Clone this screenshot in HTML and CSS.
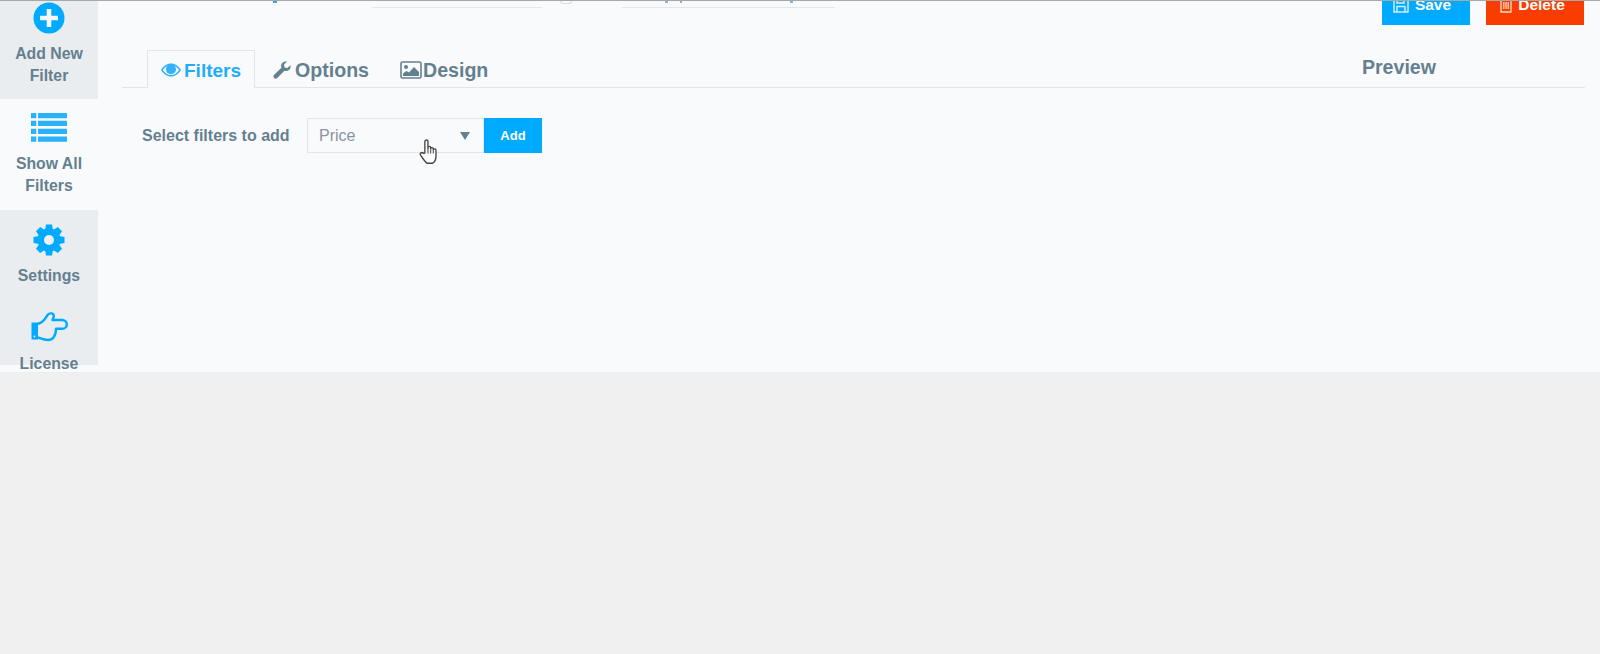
FILE: index.html
```html
<!DOCTYPE html>
<html>
<head>
<meta charset="utf-8">
<title>Filters</title>
<link rel="stylesheet" href="styles.css">
</head>
<body>
<div class="page">
  <ul class="side">
    <li class="item item-add">
      <svg class="icon" width="32" height="32" viewBox="0 0 32 32"><circle cx="16" cy="16" r="15.500" fill="#00aaff"/><path d="M13.700 7h4.600v6.700H25v4.600h-6.700V25h-4.600v-6.700H7v-4.600h6.700z" fill="#f4f9fc"/></svg>
      <span>Add New<br>Filter</span>
    </li>
    <li class="item item-list">
      <svg class="icon" width="36" height="29" viewBox="0 0 36 29" fill="#29b2fb"><path d="M0 0h5.300v5.300H0zM7 0h29v5.300H7zM0 7.700h5.300V13H0zM7 7.700h29V13H7zM0 15.700h5.300V21H0zM7 15.700h29V21H7zM0 23.500h5.300v5.300H0zM7 23.500h29v5.300H7z"/></svg>
      <span>Show All<br>Filters</span>
    </li>
    <li class="item item-settings">
      <svg class="icon" width="32" height="32" viewBox="0 0 32 32"><g fill="#00aaff"><path d="M13 .5h6l1 5.500h-8z"/><path d="M13 .5h6l1 5.500h-8z" transform="rotate(45 16 16)"/><path d="M13 .5h6l1 5.500h-8z" transform="rotate(90 16 16)"/><path d="M13 .5h6l1 5.500h-8z" transform="rotate(135 16 16)"/><path d="M13 .5h6l1 5.500h-8z" transform="rotate(180 16 16)"/><path d="M13 .5h6l1 5.500h-8z" transform="rotate(225 16 16)"/><path d="M13 .5h6l1 5.500h-8z" transform="rotate(270 16 16)"/><path d="M13 .5h6l1 5.500h-8z" transform="rotate(315 16 16)"/><circle cx="16" cy="16" r="11.500"/></g><circle cx="16" cy="16" r="5" fill="#eef1f4"/></svg>
      <span>Settings</span>
    </li>
    <li class="item item-license">
      <svg class="icon" width="37" height="31" viewBox="0 0 37 31"><rect x=".5" y="10.500" width="6.500" height="17" fill="#00aaff"/><circle cx="3.500" cy="24.500" r=".9" fill="#eef1f4"/><path d="M7 12c3-1 5-2.500 6.500-4.500L17 2.500c1.500-1.700 5.500-1.500 5.800 1 .2 1.500-.8 3-1.300 4.500H31c3 0 4.800 2 4.800 4.400s-1.800 4.400-4.800 4.400h-6c0 3.200-.5 6.200-2.500 8.700-1.500 2-3.500 2.500-5.500 2.500-4 0-7-1.500-10-2.500" fill="none" stroke="#00aaff" stroke-width="2.400" stroke-linejoin="round"/></svg>
      <span>License</span>
    </li>
  </ul>

  <div class="main">
    <div class="topbar">
      <div class="top-fields">
        <span class="top-input input-name"></span>
        <span class="top-check"></span>
        <span class="top-input input-code"></span>
      </div>
      <a class="btn btn-save">
        <svg width="16" height="16" viewBox="0 0 16 16" fill="none" stroke="#cfeeff" stroke-width="1.500"><path d="M1 1h11.500L15 3.500V15H1zM4 1v5h7V1M4 15v-5.500h8V15"/></svg>
        Save
      </a>
      <a class="btn btn-delete">
        <svg width="12" height="15" viewBox="0 0 12 15" fill="none" stroke="#ffdcc8" stroke-width="1.300"><path d="M1 1h10v13H1zM3.800 4v7M6 4v7M8.200 4v7"/></svg>
        Delete
      </a>
    </div>

    <div class="tabs">
      <a class="tab tab-active">
        <svg width="20" height="14" viewBox="0 0 20 14"><path d="M0 7c2.500-4 6-6.500 10-6.500S17.500 3 20 7c-2.500 4-6 6.500-10 6.500S2.500 11 0 7zm1.900 0c2 3 4.800 5 8.100 5s6.100-2 8.100-5c-1.200-1.800-2.700-3.200-4.400-4.100.8.900 1.300 2.100 1.300 3.400 0 2.700-2.200 4.900-5 4.900s-5-2.200-5-4.900c0-1.300.5-2.500 1.300-3.400C4.600 3.800 3.100 5.200 1.900 7z" fill="#33b1fb" fill-rule="evenodd"/></svg>
        Filters
      </a>
      <a class="tab">
        <svg width="18" height="18" viewBox="0 0 18 18"><path d="M17.500 4.200c.4 2-.2 3.800-1.600 4.900-1.300 1-3 1.200-4.500.6L4.300 16.900c-1 1-2.300 1-3.200.1-.9-.9-.9-2.200.1-3.200l7.200-7.100c-.6-1.500-.4-3.200.6-4.500C10.200.8 12 .2 14 .6l-3 3 .6 2.800 2.800.6z" fill="#64808f"/></svg>
        Options
      </a>
      <a class="tab tab-design">
        <svg width="22" height="18" viewBox="0 0 22 18"><rect x="1" y="1" width="20" height="16" rx="1.500" fill="none" stroke="#64808f" stroke-width="1.600"/><circle cx="6" cy="6" r="2" fill="#64808f"/><path d="M3 15v-2.500l3.500-2.500 2.500 1.500 5-5.500 5 5V15z" fill="#64808f"/></svg>
        Design
      </a>
      <span class="preview">Preview</span>
    </div>

    <div class="add-row">
      <label class="add-label">Select filters to add</label>
      <div class="select">
        <span>Price</span>
        <i class="caret"></i>
      </div>
      <a class="btn-add">Add</a>
      <svg class="cursor" width="19" height="26" viewBox="0 0 18 25"><path d="M5.500 13.500V2.500c0-2 3-2 3 0v6.500l0-.5c0-1.800 2.600-1.800 2.600 0v1c0-1.600 2.500-1.600 2.500 0v1c0-1.400 2.600-1.400 2.600.3v5.500c0 3-1.600 6-3.200 7H7.500c-1.500-1-3-3.400-6-7.500-1.300-2.200 1.300-3.600 2.600-2.100z" fill="#fff" stroke="#444" stroke-width="1.300" stroke-linejoin="round"/><path d="M8.500 9v5M11.100 10v4M13.600 11v3" stroke="#444"/></svg>
    </div>
  </div>
</div>
</body>
</html>
```

FILE: styles.css
```css
html, body { margin: 0; padding: 0; height: 654px; overflow: hidden; }
body { background: #f0f0f0; font: 16px "Liberation Sans", Arial, sans-serif; color: #64808f; }
.page { display: flex; box-sizing: border-box; height: 373px; border-top: 1px solid #a8a8a8; border-bottom: 1px solid #eceef0; background: #f9fafc; overflow: hidden; }

.side { flex: none; width: 98px; height: 364px; margin: 0; padding: 0; list-style: none; background: #e9edf0; }
.item { display: flex; flex-direction: column; align-items: center; font-size: 15.800px; line-height: 22px; font-weight: bold; text-align: center; }
.item .icon { display: block; flex: none; }
.item-add { height: 98px; padding-top: 1px; box-sizing: border-box; }
.item-add span { margin-top: 9px; }
.item-list { height: 111px; padding-top: 14px; box-sizing: border-box; background: #f9fafc; }
.item-list span { margin-top: 11px; }
.item-settings { height: 86px; padding-top: 14px; box-sizing: border-box; }
.item-settings span { margin-top: 9px; }
.item-license { padding-top: 16px; }
.item-license span { margin-top: 10px; }

.main { flex: 1; position: relative; padding: 0 15px 0 24px; }
.topbar { display: flex; height: 24px; }
.top-fields { display: flex; flex: 1; align-items: flex-start; background: linear-gradient(#3da5e8, #3da5e8) 151px 0 / 4px 2px no-repeat; }
.top-input { display: block; height: 6px; border-bottom: 1px solid #e6e7e9; }
.input-name { width: 170px; margin-left: 250px; }
.top-check { width: 10px; height: 2px; margin-left: 18px; border: 1px solid #ddd; border-top: 0; border-radius: 0 0 6px 6px; }
.input-code { width: 213px; margin-left: 50px; background: linear-gradient(#8fb3cc, #8fb3cc) 43px 0 / 3px 2px no-repeat, linear-gradient(#8fb3cc, #8fb3cc) 58px 0 / 2px 2px no-repeat, linear-gradient(#8fb3cc, #8fb3cc) 168px 0 / 3px 2px no-repeat; }
.btn { display: flex; align-items: center; justify-content: center; gap: 6px; flex: none; box-sizing: border-box; height: 38px; margin-top: -14px; padding-bottom: 2px; font-size: 15.500px; font-weight: bold; color: #fff; }
.btn-save { width: 88px; padding-right: 8px; background: #00aaff; }
.btn-delete { width: 98px; margin: -14px 1px 0 16px; padding-right: 5px; background: #f93c00; }

.tabs { display: flex; align-items: flex-end; height: 62px; border-bottom: 1px solid #e3e6e8; }
.tab { display: flex; align-items: center; gap: 3px; box-sizing: border-box; height: 38px; margin-bottom: -1px; padding: 2px 15px 0; font-size: 19.600px; font-weight: bold; border: 1px solid transparent; border-bottom: 0; }
.tab svg { margin-top: -2px; }
.tab-active { width: 108px; margin-left: 25px; padding: 2px 0 0 13px; border-color: #e3e6e8; background: #f9fafc; color: #1fadfb; font-size: 19px; }
.tab-active + .tab { padding-left: 17px; gap: 4px; }
.tab-design { gap: 1px; padding-left: 14px; }
.preview { margin: 0 149px 8px auto; font-size: 19.600px; line-height: 24px; font-weight: bold; }

.add-row { display: flex; align-items: center; position: relative; margin-top: 30px; height: 35px; }
.add-label { width: 165px; padding-left: 20px; font-size: 16px; font-weight: bold; }
.select { display: flex; align-items: center; justify-content: space-between; box-sizing: border-box; width: 177px; height: 35px; padding: 0 13px 0 11px; border: 1px solid #e3e6e8; color: #87959f; }
.caret { width: 0; height: 0; border-style: solid; border-width: 8px 5px 0; border-color: #64808f transparent transparent; }
.btn-add { display: block; width: 58px; line-height: 35px; text-align: center; background: #00aaff; color: #fff; font-size: 13px; font-weight: bold; }
.cursor { position: absolute; left: 297px; top: 21px; }
```
